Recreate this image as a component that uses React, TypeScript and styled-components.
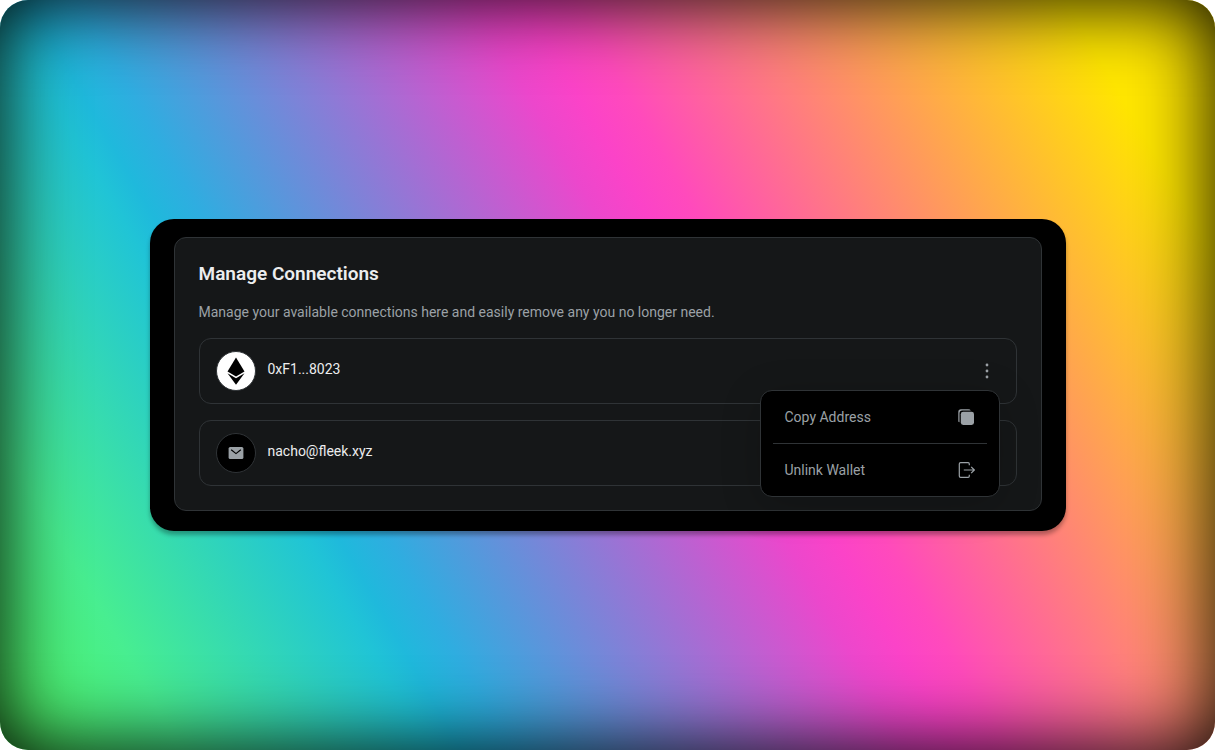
import React from "react";
import styled, { createGlobalStyle } from "styled-components";

const color = {
  panel: "#151718",
  line: "#2f3336",
  text: "#ecedee",
  muted: "#9ba1a6",
};

const GlobalStyle = createGlobalStyle`
  *, *::before, *::after { box-sizing: border-box; }
  body {
    margin: 0;
    background: #fff;
    font-family: Roboto, "Liberation Sans", sans-serif;
    font-size: 14px;
    line-height: 20px;
    color: ${color.text};
  }
  h1, p, ul { margin: 0; padding: 0; }
  button { font: inherit; color: inherit; background: none; border: 0; padding: 0; cursor: pointer; }
`;

const Backdrop = styled.main`
  display: flex;
  align-items: center;
  justify-content: center;
  min-height: 100vh;
  padding: 24px;
  border-radius: 28px;
  background: linear-gradient(
    60deg,
    #50f45c 0%,
    #48ee90 11%,
    #20c4d6 26%,
    #1fb9dc 28%,
    #2fade0 31%,
    #ec47cc 55%,
    #fb43c8 58%,
    #ff4abc 61%,
    #ffe600 91%
  );
  box-shadow: inset 0 0 80px #000;
`;

const Frame = styled.div`
  width: 100%;
  max-width: 916px;
  padding: 18px 24px 20px;
  border-radius: 24px;
  background: #000;
  box-shadow: 0 4px 4px rgba(0, 0, 0, 0.3);
`;

const Panel = styled.section`
  display: flex;
  flex-direction: column;
  gap: 16px;
  padding: 24px;
  border: 1px solid ${color.line};
  border-radius: 12px;
  background: ${color.panel};
`;

const Title = styled.h1`
  font-size: 19px;
  font-weight: 600;
  line-height: 24px;
`;

const Description = styled.p`
  color: ${color.muted};
`;

const ConnectionList = styled.ul`
  display: flex;
  flex-direction: column;
  gap: 16px;
  list-style: none;
`;

const Connection = styled.li`
  position: relative;
  display: flex;
  align-items: center;
  gap: 12px;
  padding: 12px 16px;
  border: 1px solid ${color.line};
  border-radius: 12px;
`;

const Avatar = styled.span<{ $light?: boolean }>`
  display: flex;
  align-items: center;
  justify-content: center;
  width: 40px;
  height: 40px;
  border: 1px solid ${color.line};
  border-radius: 50%;
  background: ${(p) => (p.$light ? "#fff" : "#000")};
`;

const Name = styled.span`
  flex: 1;
  padding-bottom: 4px;
`;

const MoreButton = styled.button`
  display: flex;
  align-items: center;
  justify-content: center;
  width: 26px;
  height: 24px;
  color: ${color.muted};
`;

const Menu = styled.div`
  position: absolute;
  z-index: 1;
  top: 51px;
  right: 16px;
  width: 240px;
  padding: 0 12px;
  border: 1px solid ${color.line};
  border-radius: 12px;
  background: #000;
  box-shadow: 0 8px 40px rgba(0, 0, 0, 0.2);
`;

const MenuItem = styled.button`
  display: flex;
  align-items: center;
  justify-content: space-between;
  width: 100%;
  height: 52px;
  padding: 0 12px;
  color: ${color.muted};

  & + & {
    height: 53px;
    border-top: 1px solid ${color.line};
  }
`;

const EthereumIcon = () => (
  <svg width="18" height="28" viewBox="0 0 18 28" aria-hidden="true">
    <path d="M9 0.5 17.5 14.5 9 19.5 0.5 14.5Z" />
    <path d="M0.5 16.2 9 21.2 17.5 16.2 9 27.7Z" />
  </svg>
);

const MailIcon = () => (
  <svg width="16" height="12" viewBox="0 0 16 12" aria-hidden="true">
    <rect x="0.6" y="0" width="14.8" height="12" rx="1.6" fill={color.muted} />
    <path d="M3.2 2.7 8 6.6 12.8 2.7" fill="none" stroke="#000" strokeWidth="1.2" />
  </svg>
);

const DotsIcon = () => (
  <svg width="4" height="16" viewBox="0 0 4 16" fill="currentColor" aria-hidden="true">
    <circle cx="2" cy="2" r="1.4" />
    <circle cx="2" cy="8" r="1.4" />
    <circle cx="2" cy="14" r="1.4" />
  </svg>
);

const CopyIcon = () => (
  <svg width="17" height="16" viewBox="0 0 17 16" aria-hidden="true">
    <path d="M0.3 12.4V3Q0.3 0.3 3 0.3H10.2Q12.3 0.3 12.8 1.5H4.4Q1.5 1.5 1.5 4.4V13.2Q0.7 13.2 0.3 12.4Z" fill="currentColor" />
    <rect x="2.8" y="2.8" width="13.2" height="13.1" rx="2.4" fill="currentColor" />
  </svg>
);

const UnlinkIcon = () => (
  <svg width="17" height="16" viewBox="0 0 17 16" fill="none" stroke="currentColor" strokeWidth="1.2" aria-hidden="true">
    <path d="M11.3 3.2V2Q11.3 0.7 10.1 0.7H2.6Q1.3 0.7 1.3 2V14Q1.3 15.3 2.6 15.3H10.1Q11.3 15.3 11.3 14V12.8" />
    <path d="M5.8 8H16.2M13.2 4.9 16.3 8 13.2 11.1" />
  </svg>
);

export default function App() {
  return (
    <>
      <GlobalStyle />
      <Backdrop>
        <Frame>
          <Panel aria-labelledby="connections-title">
            <Title id="connections-title">Manage Connections</Title>
            <Description>
              Manage your available connections here and easily remove any you no longer need.
            </Description>
            <ConnectionList>
              <Connection>
                <Avatar $light>
                  <EthereumIcon />
                </Avatar>
                <Name>0xF1...8023</Name>
                <MoreButton type="button" aria-label="More options" aria-haspopup="menu" aria-expanded="true">
                  <DotsIcon />
                </MoreButton>
                <Menu role="menu">
                  <MenuItem type="button" role="menuitem">
                    Copy Address
                    <CopyIcon />
                  </MenuItem>
                  <MenuItem type="button" role="menuitem">
                    Unlink Wallet
                    <UnlinkIcon />
                  </MenuItem>
                </Menu>
              </Connection>
              <Connection>
                <Avatar>
                  <MailIcon />
                </Avatar>
                <Name>nacho@fleek.xyz</Name>
              </Connection>
            </ConnectionList>
          </Panel>
        </Frame>
      </Backdrop>
    </>
  );
}
